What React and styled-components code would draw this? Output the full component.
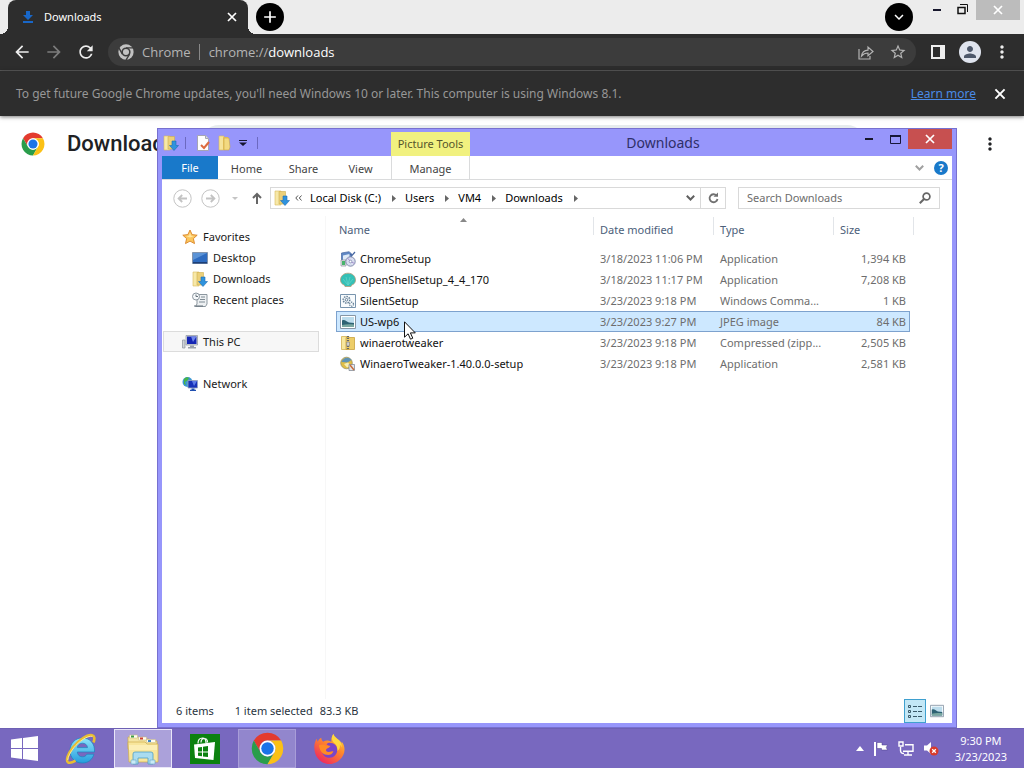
import styled, { createGlobalStyle } from "styled-components";
import {
    MdAdd,
    MdArrowBack,
    MdArrowForward,
    MdExpandMore,
    MdMoreVert,
    MdPerson,
    MdRefresh,
    MdStarBorder,
} from "react-icons/md";

const files = [
    { name: "ChromeSetup", date: "3/18/2023 11:06 PM", type: "Application", size: "1,394 KB", Icon: SetupIcon },
    { name: "OpenShellSetup_4_4_170", date: "3/18/2023 11:17 PM", type: "Application", size: "7,208 KB", Icon: ShellIcon },
    { name: "SilentSetup", date: "3/23/2023 9:18 PM", type: "Windows Comma...", size: "1 KB", Icon: CommandIcon },
    { name: "US-wp6", date: "3/23/2023 9:27 PM", type: "JPEG image", size: "84 KB", Icon: PictureIcon, selected: true },
    { name: "winaerotweaker", date: "3/23/2023 9:18 PM", type: "Compressed (zipp...", size: "2,505 KB", Icon: ZipIcon },
    { name: "WinaeroTweaker-1.40.0.0-setup", date: "3/23/2023 9:18 PM", type: "Application", size: "2,581 KB", Icon: TweakerIcon },
];

const crumbs = ["Local Disk (C:)", "Users", "VM4", "Downloads"];

export default function App() {
    return (
        <Desktop>
            <Global />
            <Browser />
            <Explorer />
            <Taskbar />
            <Pointer viewBox="0 0 12 19" aria-hidden="true">
                <path d="M.5.8v15.4l3.6-3.4 2.4 5.4 2.3-1-2.4-5.3h4.9z" fill="#fff" stroke="#111" />
            </Pointer>
        </Desktop>
    );
}

function Browser() {
    return (
        <Chrome>
            <TabStrip>
                <Tab>
                    <svg width="12" height="14" viewBox="0 0 12 14" aria-hidden="true">
                        <path d="M4 1h4v4h3L6 10 1 5h3zM1 11h10v2H1z" fill="#1967c8" />
                    </svg>
                    <TabTitle>Downloads</TabTitle>
                    <PlainButton aria-label="Close tab"><CloseIcon size={14} /></PlainButton>
                </Tab>
                <RoundButton aria-label="New tab"><MdAdd size={20} /></RoundButton>
                <Grow />
                <RoundButton aria-label="Search tabs"><MdExpandMore size={18} /></RoundButton>
                <Captions>
                    <CaptionButton aria-label="Minimize"><MinimizeIcon /></CaptionButton>
                    <CaptionButton aria-label="Restore">
                        <svg width="12" height="12" viewBox="0 0 12 12" fill="none" stroke="#111" aria-hidden="true">
                            <path d="M1 3.500h7v6H1z" strokeWidth="1.500" />
                            <path d="M3 .5h7.500V8" />
                        </svg>
                    </CaptionButton>
                    <CaptionButton aria-label="Close" $wide $bg="#bcbcbc"><CloseIcon size={14} /></CaptionButton>
                </Captions>
            </TabStrip>
            <Toolbar>
                <ToolButton aria-label="Back"><MdArrowBack size={20} /></ToolButton>
                <ToolButton aria-label="Forward" $dim><MdArrowForward size={20} /></ToolButton>
                <ToolButton aria-label="Reload"><MdRefresh size={20} /></ToolButton>
                <Omnibox>
                    <ChromeLogo size={16} mono />
                    <SiteName>Chrome</SiteName>
                    <Scheme htmlFor="url">chrome://</Scheme>
                    <UrlInput id="url" defaultValue="downloads" />
                    <OmniButton aria-label="Share this page">
                        <svg width="16" height="15" viewBox="0 0 16 15" fill="none" stroke="#b4b4b4" strokeWidth="1.2" aria-hidden="true">
                            <path d="M1 4v10h11v-3M3.500 11C4 7.500 6 5.500 10 5.200V2l5 4.500-5 4.300V8C7 8 5.200 9 3.500 11z" />
                        </svg>
                    </OmniButton>
                    <OmniButton aria-label="Bookmark this page"><MdStarBorder size={18} /></OmniButton>
                </Omnibox>
                <ToolButton aria-label="Side panel">
                    <svg width="14" height="14" viewBox="0 0 14 14" aria-hidden="true">
                        <path d="M1 1h12v12H1z" fill="none" stroke="#eee" strokeWidth="2" />
                        <path d="M9 1h4v12H9z" fill="#eee" />
                    </svg>
                </ToolButton>
                <ToolButton aria-label="Profile">
                    <Avatar><MdPerson size={18} /></Avatar>
                </ToolButton>
                <ToolButton aria-label="Customize and control Google Chrome"><MdMoreVert size={20} /></ToolButton>
            </Toolbar>
            <InfoBar>
                <InfoText>To get future Google Chrome updates, you'll need Windows 10 or later. This computer is using Windows 8.1.</InfoText>
                <InfoLink href="#learn">Learn more</InfoLink>
                <PlainButton aria-label="Dismiss"><CloseIcon size={16} /></PlainButton>
            </InfoBar>
            <PageHeader>
                <ChromeLogo size={24} />
                <PageTitle>Downloads</PageTitle>
                <PageSearch type="search" aria-label="Search downloads" />
                <PageMenu aria-label="More actions"><MdMoreVert size={20} /></PageMenu>
            </PageHeader>
        </Chrome>
    );
}

function Explorer() {
    return (
        <Frame>
            <TitleBar>
                <QuickAccess>
                    <DownloadFolderIcon />
                    <Divider />
                    <QuickButton aria-label="Properties">
                        <svg width="16" height="16" viewBox="0 0 16 16" aria-hidden="true">
                            <path d="M2.500.500h8l3 3v12h-11z" fill="#fdfdfd" stroke="#a5a5b4" />
                            <path d="M10.500.500v3h3" fill="#ddd" stroke="#a5a5b4" />
                            <path d="m6 10 3 3 5-6" fill="none" stroke="#dd6a3f" strokeWidth="2" />
                        </svg>
                    </QuickButton>
                    <QuickButton aria-label="New folder"><FolderIcon /></QuickButton>
                    <QuickButton aria-label="Customize Quick Access Toolbar">
                        <svg width="8" height="6" viewBox="0 0 8 6" aria-hidden="true">
                            <path d="M0 0h8v1H0zM0 2.500h8L4 6z" fill="#15152e" />
                        </svg>
                    </QuickButton>
                    <Divider $last />
                </QuickAccess>
                <ToolsLabel>Picture Tools</ToolsLabel>
                <WindowTitle>Downloads</WindowTitle>
                <Captions>
                    <CaptionButton aria-label="Minimize"><MinimizeIcon /></CaptionButton>
                    <CaptionButton aria-label="Maximize">
                        <svg width="11" height="9" viewBox="0 0 11 9" aria-hidden="true">
                            <path d="M.500 1.500h10v7H.500z" fill="none" stroke="#17173a" />
                            <path d="M0 0h11v2H0z" fill="#17173a" />
                        </svg>
                    </CaptionButton>
                    <CaptionButton aria-label="Close" $wide $bg="#c75050"><CloseIcon size={14} /></CaptionButton>
                </Captions>
            </TitleBar>
            <Ribbon>
                <RibbonTab $file>File</RibbonTab>
                <RibbonTab>Home</RibbonTab>
                <RibbonTab>Share</RibbonTab>
                <RibbonTab>View</RibbonTab>
                <RibbonTab $context>Manage</RibbonTab>
                <Grow />
                <RibbonButton aria-label="Expand the Ribbon"><ChevronIcon color="#a0a0a0" /></RibbonButton>
                <RibbonButton aria-label="Help">
                    <HelpMark>?</HelpMark>
                </RibbonButton>
            </Ribbon>
            <AddressRow>
                <NavButton aria-label="Back"><RoundArrow /></NavButton>
                <NavButton aria-label="Forward"><RoundArrow flip /></NavButton>
                <NavButton aria-label="Recent locations" $small>
                    <svg width="6" height="3" viewBox="0 0 6 3" aria-hidden="true"><path d="M0 0h6L3 3z" fill="#c4c4c4" /></svg>
                </NavButton>
                <NavButton aria-label="Up" $small>
                    <svg width="10" height="12" viewBox="0 0 10 12" fill="none" stroke="#666" strokeWidth="2" aria-hidden="true">
                        <path d="M5 12V2M1 6l4-4 4 4" />
                    </svg>
                </NavButton>
                <AddressBox>
                    <DownloadFolderIcon />
                    <svg width="7" height="6" viewBox="0 0 7 6" fill="none" stroke="#555" aria-hidden="true">
                        <path d="M3 .500.800 3 3 5.500M6.500.500 4.300 3l2.200 2.500" />
                    </svg>
                    <Crumbs>
                        {crumbs.map((crumb) => (
                            <Crumb key={crumb}>
                                {crumb}
                                <svg width="4" height="7" viewBox="0 0 4 7" aria-hidden="true"><path d="M0 0v7l4-3.500z" fill="#666" /></svg>
                            </Crumb>
                        ))}
                    </Crumbs>
                    <PlainButton aria-label="Previous locations"><ChevronIcon color="#606060" /></PlainButton>
                    <Refresh aria-label="Refresh">
                        <svg width="11" height="12" viewBox="0 0 11 12" aria-hidden="true">
                            <path d="M8.500 3.500A4 4 0 1 0 9.500 7" fill="none" stroke="#707070" strokeWidth="1.800" />
                            <path d="M5.500 4.800H10V.500z" fill="#707070" />
                        </svg>
                    </Refresh>
                </AddressBox>
                <SearchBox>
                    <SearchInput type="text" aria-label="Search Downloads" placeholder="Search Downloads" />
                    <svg width="12" height="12" viewBox="0 0 12 12" fill="none" stroke="#666" strokeWidth="1.700" aria-hidden="true">
                        <circle cx="7.500" cy="4.500" r="3.400" />
                        <path d="M5 7 .800 11.200" strokeWidth="2" />
                    </svg>
                </SearchBox>
            </AddressRow>
            <Body>
                <Sidebar aria-label="Navigation pane">
                    <Place href="#favorites"><StarIcon />Favorites</Place>
                    <Place href="#desktop" $nested><DesktopIcon />Desktop</Place>
                    <Place href="#downloads" $nested><DownloadFolderIcon />Downloads</Place>
                    <Place href="#recent" $nested><RecentIcon />Recent places</Place>
                    <Place href="#pc" $apart $current><ComputerIcon />This PC</Place>
                    <Place href="#network" $apart><NetworkIcon />Network</Place>
                </Sidebar>
                <List>
                    <FileTable>
                        <colgroup>
                            <Col $w={258} />
                            <Col $w={120} />
                            <Col $w={120} />
                            <Col $w={76} />
                            <Col $w={4} />
                        </colgroup>
                        <thead>
                            <tr>
                                <Head $first>
                                    Name
                                    <SortMark viewBox="0 0 7 4" aria-hidden="true"><path d="M0 4h7L3.500 0z" fill="#888" /></SortMark>
                                </Head>
                                <Head>Date modified</Head>
                                <Head>Type</Head>
                                <Head $open>Size</Head>
                                <Head aria-hidden="true" />
                            </tr>
                        </thead>
                        <tbody>
                            {files.map(({ name, date, type, size, Icon, selected }) => (
                                <Row key={name} $selected={selected}>
                                    <NameCell><FileName><Icon />{name}</FileName></NameCell>
                                    <Cell>{date}</Cell>
                                    <Cell>{type}</Cell>
                                    <Cell $right>{size}</Cell>
                                    <td />
                                </Row>
                            ))}
                        </tbody>
                    </FileTable>
                </List>
            </Body>
            <StatusBar>
                <span>6 items</span>
                <Selection><span>1 item selected</span><span>83.3 KB</span></Selection>
                <Grow />
                <ViewButton aria-label="Details view" $active>
                    <svg width="16" height="13" viewBox="0 0 16 13" fill="none" stroke="#3a5a6a" aria-hidden="true">
                        <path d="M1.500.500h2v2h-2zM1.500 5.500h2v2h-2zM1.500 10.500h2v2h-2z" />
                        <path d="M6 1.500h4m1 0h4M6 6.500h4m1 0h4M6 11.500h4m1 0h4" />
                    </svg>
                </ViewButton>
                <ViewButton aria-label="Large thumbnails view"><PictureIcon small /></ViewButton>
            </StatusBar>
        </Frame>
    );
}

function Taskbar() {
    return (
        <Bar>
            <Start aria-label="Start">
                <svg width="27" height="25" viewBox="0 0 27 25" fill="#fff" aria-hidden="true">
                    <path d="M0 3.600 11 2v10H0zM12 1.900 27 0v12H12zM0 13h11v10L0 21.400zM12 13h15v12l-15-1.900z" />
                </svg>
            </Start>
            <Task aria-label="Internet Explorer"><IeIcon /></Task>
            <Task aria-label="File Explorer" $state="active"><LibraryIcon /></Task>
            <Task aria-label="Store"><StoreIcon /></Task>
            <Task aria-label="Google Chrome" $state="open"><ChromeLogo size={33} /></Task>
            <Task aria-label="Firefox"><FirefoxIcon /></Task>
            <Grow />
            <Tray>
                <PlainButton aria-label="Show hidden icons">
                    <svg width="8" height="5" viewBox="0 0 8 5" aria-hidden="true"><path d="M0 5h8L4 0z" fill="#fff" /></svg>
                </PlainButton>
                <PlainButton aria-label="Action Center">
                    <svg width="16" height="15" viewBox="0 0 16 15" aria-hidden="true">
                        <path d="M1 1h2v14H1z" fill="#fff" />
                        <path d="M4 1.500h5V4h5.500l-1.200 2.500L14.500 9H8.500V7.500H4z" fill="#fff" stroke="#4b3f88" strokeWidth=".5" />
                    </svg>
                </PlainButton>
                <PlainButton aria-label="Network">
                    <svg width="16" height="15" viewBox="0 0 16 15" fill="none" stroke="#fff" strokeWidth="1.400" aria-hidden="true">
                        <path d="M7 3.700h8v6.600H5M10 10.500v3M6 14h8M2.500 6v3.500c0 2 1 3 3.500 3" />
                        <path d="M1 1h4v4H1z" fill="#7667bd" />
                    </svg>
                </PlainButton>
                <PlainButton aria-label="Volume muted">
                    <svg width="16" height="15" viewBox="0 0 16 15" aria-hidden="true">
                        <path d="M1 4.500h3L8 1v12L4 9.500H1z" fill="#fff" />
                        <circle cx="11" cy="10" r="4.500" fill="#d83b2c" />
                        <path d="m9.200 8.200 3.600 3.600m0-3.600-3.600 3.600" stroke="#fff" strokeWidth="1.300" />
                    </svg>
                </PlainButton>
                <Clock><span>9:30 PM</span><span>3/23/2023</span></Clock>
            </Tray>
        </Bar>
    );
}

/* icons */

function ChromeLogo({ size, mono }) {
    if (mono) {
        return (
            <svg width={size} height={size} viewBox="1 1 46 46" aria-hidden="true">
                <circle cx="24" cy="24" r="22" fill="#c2c2c2" />
                <circle cx="24" cy="24" r="11" fill="none" stroke="#3c3c3c" strokeWidth="4.500" />
                <path d="M24 12h20M13.600 30 4 13M34.400 30 24 47" stroke="#3c3c3c" strokeWidth="4" />
            </svg>
        );
    }
    return (
        <svg width={size} height={size} viewBox="1 1 46 46" aria-hidden="true">
            <path d="M4.950 13A22 22 0 0 1 43.050 13H24A11 11 0 0 0 14.470 29.500z" fill="#e33b2e" />
            <path d="M4.950 13l9.520 16.500a11 11 0 0 0 19.060 0L24 46A22 22 0 0 1 4.950 13z" fill="#2a9d4b" />
            <path d="M43.050 13A22 22 0 0 1 24 46l9.530-16.500A11 11 0 0 0 24 13z" fill="#fbc116" />
            <circle cx="24" cy="24" r="11" fill="#fff" />
            <circle cx="24" cy="24" r="8.700" fill="#1a73e8" />
        </svg>
    );
}

function CloseIcon({ size }) {
    return (
        <svg width={size} height={size} viewBox="0 0 14 14" fill="none" stroke="#fff" strokeWidth="1.700" aria-hidden="true">
            <path d="m3 3 8 8m0-8-8 8" />
        </svg>
    );
}

function MinimizeIcon() {
    return <svg width="8" height="2" viewBox="0 0 8 2" aria-hidden="true"><path d="M0 0h8v2H0z" fill="#17172c" /></svg>;
}

function ChevronIcon({ color }) {
    return (
        <svg width="9" height="6" viewBox="0 0 9 6" fill="none" stroke={color} strokeWidth="2" aria-hidden="true">
            <path d="m.800.800 3.700 3.700L8.200.800" />
        </svg>
    );
}

function RoundArrow({ flip }) {
    return (
        <svg width="19" height="19" viewBox="0 0 19 19" fill="none" stroke="#c3c3c3" aria-hidden="true">
            <circle cx="9.500" cy="9.500" r="8.700" />
            <path d={flip ? "M5 9.500h8M9.800 6l3.600 3.500L9.800 13" : "M14 9.500H6M9.200 6 5.600 9.500 9.200 13"} strokeWidth="1.800" />
        </svg>
    );
}

function FolderIcon() {
    return (
        <svg width="16" height="16" viewBox="0 0 16 16" aria-hidden="true">
            <path d="M2 1h5v14H2z" fill="#f6e39a" stroke="#d9b955" strokeWidth=".6" />
            <path d="M6 2h5v13H6z" fill="#e5c260" />
            <path d="M7 3h5l1 9-1 3H7z" fill="#f3d980" stroke="#cfa940" strokeWidth=".6" />
        </svg>
    );
}

function DownloadFolderIcon() {
    return (
        <svg width="16" height="16" viewBox="0 0 16 16" aria-hidden="true">
            <path d="M1 1h6v14H1z" fill="#f7e8a8" stroke="#d8bb5c" strokeWidth=".6" />
            <path d="M5 1.500h6.500V14H5z" fill="#ecd07a" stroke="#cfae4e" strokeWidth=".6" />
            <path d="M9 6h4v4.500h2.500L11 15.500l-4.500-5H9z" fill="#2f93dd" stroke="#1b6cb5" strokeWidth=".6" />
        </svg>
    );
}

function StarIcon() {
    return (
        <svg width="16" height="16" viewBox="0 0 16 16" aria-hidden="true">
            <path d="m8 1 2.100 4.600 5.100.600-3.800 3.400 1.100 5L8 12.100l-4.500 2.500 1.100-5L.800 6.200l5.100-.600z" fill="#fbc65c" stroke="#d98327" strokeWidth=".9" />
            <path d="m8 3.500 1 3.200 3 .4-4 1.400-4-1.400 3-.4z" fill="#ffe6a3" />
        </svg>
    );
}

function DesktopIcon() {
    return (
        <svg width="16" height="16" viewBox="0 0 16 16" aria-hidden="true">
            <path d="M.500 2.500h15v11H.500z" fill="#2f6cc0" stroke="#8294ad" />
            <path d="M1 3h14L1 10z" fill="#5b93d6" />
            <path d="M1 12h14v1.500H1z" fill="#1d3f77" />
        </svg>
    );
}

function RecentIcon() {
    return (
        <svg width="16" height="16" viewBox="0 0 16 16" aria-hidden="true">
            <path d="M5 2.500h10V12l-1.500 2.500H3.500L5 12z" fill="#eef1f3" stroke="#8c979f" />
            <path d="M9 5h4M8 7.500h5M7 10h6" stroke="#7f8b94" />
            <circle cx="4" cy="4.500" r="3.500" fill="#f5f8fa" stroke="#8c979f" />
            <path d="M4 2.500v2h2M2 14h9" fill="none" stroke="#65717b" />
        </svg>
    );
}

function ComputerIcon() {
    return (
        <svg width="16" height="16" viewBox="0 0 16 16" aria-hidden="true">
            <path d="M.500 6h2.500v8H.500z" fill="#cfd3d8" stroke="#8b929c" strokeWidth=".7" />
            <path d="M4 1.500h11.500v9.500H4z" fill="#d5d9df" stroke="#8b929c" strokeWidth=".7" />
            <path d="M5 2.500h9.500V10H5z" fill="#1526b4" />
            <path d="M9 2.500h5.500L11 8z" fill="#6f86ea" />
            <path d="M8 11.500h4V13h2v1.500H6V13h2z" fill="#9aa1ab" />
        </svg>
    );
}

function NetworkIcon() {
    return (
        <svg width="16" height="16" viewBox="0 0 16 16" aria-hidden="true">
            <circle cx="5.500" cy="6" r="5" fill="#3b97d3" />
            <path d="M2 3c2-2 4-2 5-1L5 5 3 6l1 3-2-1z" fill="#48b548" />
            <path d="M6 4.500h9.500V12H6z" fill="#1832b8" stroke="#9aa6bd" strokeWidth=".8" />
            <path d="M10 5h5l-3 5z" fill="#5d7be6" />
            <path d="M9.500 12.500h3v1.200h1.500V15H8v-1.300h1.500z" fill="#1f4fb0" />
        </svg>
    );
}

function SetupIcon() {
    return (
        <svg width="16" height="16" viewBox="0 0 16 16" aria-hidden="true">
            <path d="M1.500 2 9 .700l2.500 2v7l-7 2-3-1.700z" fill="#6088c4" stroke="#4565a0" strokeWidth=".7" />
            <path d="M3 4.500 9.500 3v7L3 12z" fill="#dfeaf7" />
            <path d="M1 9h5v6H1z" fill="#e6e6e6" stroke="#8a919b" strokeWidth=".7" />
            <path d="M2 10h3v4H2z" fill="#48b46c" />
            <circle cx="10.500" cy="10.500" r="4.700" fill="#d9ddf0" stroke="#68739b" strokeWidth=".8" />
            <path d="M10.500 10.500 7.500 7M10.500 10.500l4 2" stroke="#a794d0" />
            <circle cx="10.500" cy="10.500" r="1.300" fill="#fff" stroke="#68739b" strokeWidth=".6" />
            <path d="m10 3 2 1.500L15 1" fill="none" stroke="#4565a0" strokeWidth="1.200" />
        </svg>
    );
}

function ShellIcon() {
    return (
        <svg width="16" height="16" viewBox="0 0 16 16" aria-hidden="true">
            <path d="M8 1.200C3.500 1.200.500 4.200.500 8c0 2.500 1.500 4.300 3.500 4.800L5 14.500h6l1-1.700c2-.500 3.500-2.300 3.500-4.800 0-3.800-3-6.800-7.500-6.800z" fill="#35c0b6" stroke="#b59a78" strokeWidth=".8" />
            <path d="M8 13 3 7M8 13 6 5M8 13l2-8M8 13l5-6" stroke="#63d5ca" strokeWidth=".7" />
        </svg>
    );
}

function CommandIcon() {
    return (
        <svg width="16" height="16" viewBox="0 0 16 16" fill="none" aria-hidden="true">
            <path d="M.500 1.500h15v13H.500z" fill="#f8fbfd" stroke="#7894ad" />
            <circle cx="6.500" cy="6.800" r="3.300" stroke="#668096" strokeWidth="1.500" strokeDasharray="1.500 1" />
            <circle cx="6.500" cy="6.800" r="1.300" stroke="#668096" />
            <circle cx="11.500" cy="11.200" r="2" stroke="#668096" strokeWidth="1.300" strokeDasharray="1.200 .8" />
        </svg>
    );
}

function PictureIcon({ small }) {
    const size = small ? 14 : 16;
    return (
        <svg width={size} height={size} viewBox="0 0 16 16" aria-hidden="true">
            <path d="M.500 1.500h15v13H.500z" fill="#fff" stroke="#8796a5" />
            <path d="M2 3h12v10H2z" fill="#bcdcec" />
            <path d="M2 6.500c3-1.500 4 1 7 2L14 9v4H2z" fill="#2e6273" />
            <path d="M2 11c4-1 8-1 12-.500V13H2z" fill="#79a7a0" />
        </svg>
    );
}

function ZipIcon() {
    return (
        <svg width="16" height="16" viewBox="0 0 16 16" aria-hidden="true">
            <path d="M1.500 1.500h7v13h-7z" fill="#f8e79e" stroke="#d3b150" strokeWidth=".8" />
            <path d="M6 2.500h8.500v12H6z" fill="#edcd68" stroke="#c9a23e" strokeWidth=".8" />
            <path d="M8 1v14" stroke="#666" strokeWidth="2.200" strokeDasharray="1 1" />
            <path d="M6.800 7h2.500v4H6.800z" fill="#ddd" stroke="#777" strokeWidth=".6" />
        </svg>
    );
}

function TweakerIcon() {
    return (
        <svg width="16" height="16" viewBox="0 0 16 16" aria-hidden="true">
            <circle cx="6.500" cy="7" r="5.800" fill="#dfbd45" stroke="#8f8a5c" strokeWidth=".7" />
            <path d="M1.500 6c1-4 7-6 10-2L7.500 6.500z" fill="#5f93b4" />
            <path d="M4 8 8 6.500l3 3.500-4 1.500z" fill="#f7eeb2" />
            <path d="M9 8.500h5.500V14.500H9z" fill="#e4e6ea" stroke="#777f8c" strokeWidth=".7" />
            <path d="m10 9 4 5" stroke="#c76d3b" strokeWidth="1.500" />
        </svg>
    );
}

function IeIcon() {
    return (
        <svg width="32" height="32" viewBox="0 0 32 32" fill="none" aria-hidden="true">
            <defs>
                <linearGradient id="ie" x1="0" y1="0" x2="0" y2="1">
                    <stop offset="0" stopColor="#8fe3fb" />
                    <stop offset="1" stopColor="#249ddd" />
                </linearGradient>
            </defs>
            <path d="M29.500 19H12.300c.3 3 2.400 4.800 5 4.800 2.200 0 3.700-.9 4.600-2.600h7C27.400 26.600 23.200 30 17.400 30 10 30 5 24.800 5 17.700 5 10.500 10 5 17.300 5c8 0 12.700 5.700 12.200 14zM12.300 14.600h10.200c-.3-2.700-2.200-4.400-5-4.400s-4.800 1.700-5.200 4.400z" fill="url(#ie)" stroke="#1d83bd" strokeWidth=".7" />
            <path d="M28.500 9.500c1.500-4 1-6.800-1.500-7.300-5-.9-13.500 5-19 12C2.700 21 .700 27.600 3 29.300c1.500 1 4.500.2 7.500-1.700" stroke="#e8bd32" strokeWidth="2.600" />
            <path d="M27.500 3.300C22 2.500 14 8.500 9 14.500 5.500 19 3 23.500 2.700 27" stroke="#fbe794" />
        </svg>
    );
}

function LibraryIcon() {
    return (
        <svg width="34" height="32" viewBox="0 0 34 32" aria-hidden="true">
            <path d="M2 4h10l1 2h10l1 2h7v8H2z" fill="#f4e5a4" stroke="#c9a94d" strokeWidth=".7" />
            <path d="M3.500 2h8v3h-8zM12.500 4h8v3h-8zM20.500 6.500h9v3h-9z" fill="#fffdf2" stroke="#c9b878" strokeWidth=".5" />
            <path d="M5 2.500h3v2H5z" fill="#3d9c46" />
            <path d="M14 4.500h3v2h-3z" fill="#cf4030" />
            <path d="M22 7h3v2h-3z" fill="#3f86c4" />
            <path d="M2 9h17l2 2h11v18H3z" fill="#f8e69c" stroke="#cfad4c" strokeWidth=".7" />
            <path d="M3 12h28v5H3z" fill="#fcefb6" />
            <path d="M7 31V21q0-2 2-2h16q2 0 2 2v10h-5v-6H12v6z" fill="#a9dcf0" stroke="#4f9fc4" strokeWidth=".8" />
            <path d="M5 27h5v4H5zM24 27h5v4h-5z" fill="#c9ebf7" stroke="#6aaac8" strokeWidth=".6" />
        </svg>
    );
}

function StoreIcon() {
    return (
        <svg width="30" height="30" viewBox="0 0 30 30" aria-hidden="true">
            <path d="M0 0h30v30H0z" fill="#0c810f" />
            <path d="M8 9.500c0-4 2-5.500 4.500-5.500s3.500 2 3.500 5M11 8.500c0-3 1.500-4 3.500-4s3 1.500 3 4" fill="none" stroke="#fff" strokeWidth="1.200" />
            <path d="m4 10.500 21-2.500-1.500 18L5 24z" fill="#fff" />
            <path d="m8 13.500 4-.600V17.500H8zM13 12.700l5-.800v5.600h-5zM8 18.500h4v3.800l-4-.500zM13 18.500h5V23l-5-.600z" fill="#0c810f" />
        </svg>
    );
}

function FirefoxIcon() {
    return (
        <svg width="31" height="32" viewBox="0 0 32 32" aria-hidden="true">
            <defs>
                <linearGradient id="fx" x1="1" y1="0" x2=".3" y2="1">
                    <stop offset="0" stopColor="#ffe447" />
                    <stop offset=".45" stopColor="#ff8a2a" />
                    <stop offset="1" stopColor="#ee2860" />
                </linearGradient>
            </defs>
            <path d="M20 .500c-2 3-2.500 5.500-2 8C13 6 10 8 9.500 8.500 8 7.500 7.500 6 7.500 4.500c-2 1-3 2.500-3.500 4L2.500 5.500C0 11 0 14 .700 18 2 26 8.500 31.500 16 31.500S31.500 25 31.500 16.500c0-3-1-6-3-8l.2 2C27.500 6.500 21 5.500 20 .500z" fill="url(#fx)" />
            <path d="M20 .500c-2 3-2 6 0 8.500 3 2.500 4.500 5 4 9 3-2 3-5 2.500-7 1 1 1.500 2 2 3.500.500-3-.500-5-2.500-7.500C24 5 21 3.500 20 .500z" fill="#ffd83f" />
            <path d="M16 9.500c5 0 8 3 8 7.500s-3.500 8-8 8-7.500-3-7.500-7c1 1 3 1.500 4.500.500-2-1-1.500-3.500.5-4 1.500-.5 3-.5 3.500-1.500-1.500-.5-3-.7-4-2 .8-.9 1.800-1.500 3-1.500z" fill="#7a45c9" />
            <path d="M5 12c3-1 5-1 7 .500 1.500 1 3.500.500 4.500 1-.5 1.500-3 1.500-4 3-.5 1.500.5 2.500 2.500 2.500 3 0 4-1 5-.500-1 3-4 4-7 3.500-5-1-7-5-8-10z" fill="#ff8b24" />
        </svg>
    );
}

/* styles */

const Global = createGlobalStyle`
    *{
        box-sizing: border-box;
    }
    body{
        margin: 0;
        background: #fff;
        color: #1a1a1a;
        font-family: "Noto Sans", "Open Sans", sans-serif;
        font-size: 11px;
        line-height: 16px;
    }
    button, input{
        font: inherit;
        color: inherit;
    }
    svg{
        flex: none;
        display: block;
    }
`;

const Desktop = styled.div`
    position: relative;
    display: flex;
    flex-direction: column;
    min-height: 100vh;
`;

const Grow = styled.div`
    flex: 1;
`;

const PlainButton = styled.button`
    display: flex;
    align-items: center;
    justify-content: center;
    padding: 0;
    border: 0;
    background: none;
`;

const Pointer = styled.svg`
    position: absolute;
    left: 404px;
    top: 321px;
    width: 12px;
    height: 19px;
`;

const Chrome = styled.main`
    flex: 1;
    display: flex;
    flex-direction: column;
`;

const TabStrip = styled.div`
    display: flex;
    align-items: center;
    height: 34px;
    padding: 0 4px 0 8px;
    background: #ececec;
`;

const Tab = styled.div`
    position: relative;
    display: flex;
    align-items: center;
    align-self: stretch;
    gap: 10px;
    width: 240px;
    margin-right: 8px;
    padding: 0 9px 0 14px;
    border-radius: 8px 8px 0 0;
    background: #2d2d2d;
    color: #fff;
    &::before, &::after{
        content: "";
        position: absolute;
        bottom: 0;
        width: 8px;
        height: 8px;
    }
    &::before{
        left: -8px;
        background: radial-gradient(circle at 0 0, #ececec 8px, #2d2d2d 8px);
    }
    &::after{
        right: -8px;
        background: radial-gradient(circle at 100% 0, #ececec 8px, #2d2d2d 8px);
    }
`;

const TabTitle = styled.span`
    flex: 1;
`;

const RoundButton = styled(PlainButton)`
    width: 28px;
    height: 28px;
    border-radius: 50%;
    background: #000;
    color: #fff;
`;

const Captions = styled.div`
    display: flex;
    align-self: flex-start;
    ${TabStrip} &{
        margin-left: 11px;
    }
`;

const CaptionButton = styled(PlainButton)`
    width: ${(p) => (p.$wide ? 44 : 26)}px;
    height: 20px;
    background: ${(p) => p.$bg || "none"};
`;

const Toolbar = styled.div`
    display: flex;
    align-items: center;
    height: 37px;
    padding: 0 6px;
    border-bottom: 1px solid #5a5a5a;
    background: #2d2d2d;
`;

const ToolButton = styled(PlainButton)`
    width: 32px;
    height: 28px;
    color: ${(p) => (p.$dim ? "#7c7c7c" : "#eee")};
`;

const Omnibox = styled.div`
    flex: 1;
    display: flex;
    align-items: center;
    height: 28px;
    margin: 0 6px;
    padding: 0 2px 0 10px;
    border-radius: 14px;
    background: #3c3c3c;
    color: #b4b4b4;
    font-family: "Open Sans", "Noto Sans", sans-serif;
    font-size: 13px;
`;

const SiteName = styled.span`
    margin-left: 8px;
    padding-right: 8px;
    border-right: 1px solid #888;
`;

const Scheme = styled.label`
    margin-left: 9px;
`;

const UrlInput = styled.input`
    flex: 1;
    min-width: 0;
    padding: 0;
    border: 0;
    outline: 0;
    background: none;
    color: #fff;
`;

const OmniButton = styled(PlainButton)`
    width: 32px;
`;

const Avatar = styled.span`
    display: flex;
    align-items: center;
    justify-content: center;
    width: 22px;
    height: 22px;
    border-radius: 50%;
    background: #dfe4ee;
    color: #4d586b;
`;

const InfoBar = styled.div`
    position: relative;
    display: flex;
    align-items: center;
    gap: 16px;
    height: 45px;
    padding: 0 16px;
    background: #2d2d2d;
    box-shadow: 0 1px 4px #0008;
    font-size: 12px;
`;

const InfoText = styled.span`
    flex: 1;
    color: #979797;
`;

const InfoLink = styled.a`
    color: #4a8ae6;
`;

const PageHeader = styled.header`
    display: flex;
    align-items: center;
    height: 56px;
    padding: 0 24px 0 21px;
`;

const PageTitle = styled.h1`
    margin: 0 24px 0 22px;
    color: #202124;
    font: 500 22px/28px Roboto, sans-serif;
`;

const PageSearch = styled.input`
    flex: 1;
    height: 38px;
    margin-right: 114px;
    border: 0;
    border-radius: 19px;
    background: #e6ebed;
`;

const PageMenu = styled(PlainButton)`
    color: #202124;
`;

const Frame = styled.section`
    position: absolute;
    top: 128px;
    right: 67px;
    bottom: 40px;
    left: 157px;
    display: flex;
    flex-direction: column;
    padding: 0 4px 4px;
    border: 1px solid #7770cf;
    background: #9796fb;
`;

const TitleBar = styled.div`
    display: flex;
    align-items: stretch;
    height: 27px;
`;

const QuickAccess = styled.div`
    display: flex;
    align-items: center;
    gap: 6px;
    width: 229px;
    padding-left: 1px;
`;

const QuickButton = styled(PlainButton)`
    flex: none;
`;

const Divider = styled.span`
    width: 1px;
    height: 12px;
    margin: ${(p) => (p.$last ? "0 0 0 4px" : "0 3px 0 0")};
    background: #6c69c0;
`;

const ToolsLabel = styled.div`
    width: 79px;
    margin-top: 3px;
    background: #f1f17f;
    color: #55552c;
    line-height: 24px;
    text-align: center;
    white-space: nowrap;
`;

const WindowTitle = styled.h2`
    flex: 1;
    margin: 0;
    color: #2f2f68;
    font-size: 14px;
    font-weight: 400;
    line-height: 27px;
    text-align: center;
`;

const Ribbon = styled.div`
    display: flex;
    height: 24px;
    border-bottom: 1px solid #dadbdc;
    background: #fff;
`;

const RibbonTab = styled(PlainButton)`
    width: ${(p) => (p.$context ? 79 : p.$file ? 56 : 57)}px;
    margin-left: ${(p) => (p.$context ? 2 : 0)}px;
    padding-top: ${(p) => (p.$file ? 0 : 2)}px;
    border: solid #dadbdc;
    border-width: ${(p) => (p.$context ? "0 1px" : 0)};
    background: ${(p) => (p.$file ? "#1979ca" : "none")};
    color: ${(p) => (p.$file ? "#fff" : "#444")};
`;

const RibbonButton = styled(PlainButton)`
    width: 22px;
`;

const HelpMark = styled.span`
    width: 14px;
    height: 14px;
    border-radius: 50%;
    background: #1979ca;
    color: #fff;
    font-weight: 700;
    line-height: 14px;
`;

const AddressRow = styled.div`
    display: flex;
    align-items: center;
    height: 36px;
    padding: 0 12px 0 6px;
    background: #fff;
`;

const NavButton = styled(PlainButton)`
    width: ${(p) => (p.$small ? 22 : 28)}px;
    height: 22px;
`;

const AddressBox = styled.div`
    flex: 1;
    display: flex;
    align-items: center;
    gap: 5px;
    height: 22px;
    margin-left: 2px;
    padding-left: 3px;
    border: 1px solid #d9d9d9;
`;

const Crumbs = styled.div`
    flex: 1;
    display: flex;
    gap: 9px;
    margin-left: 3px;
    color: #000;
`;

const Crumb = styled.span`
    display: flex;
    align-items: center;
    gap: 11px;
`;

const Refresh = styled(PlainButton)`
    align-self: stretch;
    width: 25px;
    border-left: 1px solid #d9d9d9;
`;

const SearchBox = styled.div`
    display: flex;
    align-items: center;
    width: 202px;
    height: 22px;
    margin-left: 12px;
    padding: 0 8px;
    border: 1px solid #d9d9d9;
`;

const SearchInput = styled.input`
    flex: 1;
    min-width: 0;
    padding: 0;
    border: 0;
    outline: 0;
    background: none;
    &::placeholder{
        color: #6d6d6d;
        opacity: 1;
    }
`;

const Body = styled.div`
    flex: 1;
    display: flex;
    min-height: 0;
    background: #fff;
`;

const Sidebar = styled.nav`
    width: 164px;
    padding: 10px 6px 0 1px;
    border-right: 1px solid #f7f7f7;
`;

const Place = styled.a`
    display: flex;
    align-items: center;
    gap: 5px;
    height: 21px;
    margin-top: ${(p) => (p.$apart ? 21 : 0)}px;
    padding-left: ${(p) => (p.$nested ? 28 : 18)}px;
    border: 1px solid ${(p) => (p.$current ? "#dcdcdc" : "transparent")};
    background: ${(p) => (p.$current ? "#f7f7f7" : "none")};
    color: #1a1a1a;
    text-decoration: none;
`;

const List = styled.div`
    flex: 1;
    padding-left: 10px;
`;

const FileTable = styled.table`
    table-layout: fixed;
    width: 578px;
    border-spacing: 0;
`;

const Col = styled.col`
    width: ${(p) => p.$w}px;
`;

const Head = styled.th`
    position: relative;
    height: 32px;
    padding: 0 0 4px ${(p) => (p.$first ? 3 : 6)}px;
    color: #4c607a;
    font-weight: 400;
    text-align: left;
    &::after{
        content: "";
        position: absolute;
        top: 1px;
        right: 0;
        width: ${(p) => (p.$open ? 0 : 1)}px;
        height: 18px;
        background: #e2e5e9;
    }
`;

const SortMark = styled.svg`
    position: absolute;
    top: 2px;
    left: calc(50% - 5px);
    width: 7px;
    height: 4px;
`;

const Cell = styled.td`
    height: 21px;
    padding: 0 ${(p) => (p.$right ? 4 : 0)}px 0 6px;
    color: #6d6d6d;
    text-align: ${(p) => (p.$right ? "right" : "left")};
    white-space: nowrap;
`;

const NameCell = styled(Cell)`
    padding-left: 4px;
    color: #111;
`;

const FileName = styled.div`
    display: flex;
    align-items: center;
    gap: 4px;
`;

const Row = styled.tr`
    ${Cell}{
        border: solid ${(p) => (p.$selected ? "#7da2ce" : "transparent")};
        border-width: ${(p) => (p.$selected ? "1px 0" : 0)};
        background: ${(p) => (p.$selected ? "#cde8ff" : "none")};
    }
    ${Cell}:first-child{
        box-shadow: ${(p) => (p.$selected ? "inset 1px 0 #7da2ce" : "none")};
    }
    ${Cell}:nth-child(4){
        box-shadow: ${(p) => (p.$selected ? "inset -1px 0 #7da2ce" : "none")};
    }
`;

const StatusBar = styled.footer`
    display: flex;
    align-items: center;
    height: 24px;
    padding: 0 4px 0 14px;
    background: #fff;
    color: #2a3440;
`;

const Selection = styled.span`
    display: flex;
    gap: 7px;
    margin-left: 21px;
`;

const ViewButton = styled(PlainButton)`
    width: 22px;
    height: 24px;
    border: 1px solid ${(p) => (p.$active ? "#3fa0cf" : "transparent")};
    background: ${(p) => (p.$active ? "#c3e7f6" : "none")};
`;

const Bar = styled.footer`
    display: flex;
    gap: 4px;
    height: 40px;
    border-top: 1px solid #6e60b4;
    background: #7868bf;
`;

const Start = styled(PlainButton)`
    width: 48px;
`;

const Task = styled(PlainButton)`
    width: 58px;
    border: 1px solid ${(p) => (p.$state === "active" ? "#e9e6f8" : p.$state ? "#a89dd8" : "transparent")};
    background: ${(p) => (p.$state === "active" ? "#aba1da" : p.$state ? "#9286cd" : "none")};
`;

const Tray = styled.div`
    display: flex;
    align-items: center;
    gap: 9px;
    padding-right: 17px;
    color: #fff;
`;

const Clock = styled.div`
    display: flex;
    flex-direction: column;
    align-items: center;
    margin-left: 7px;
`;
